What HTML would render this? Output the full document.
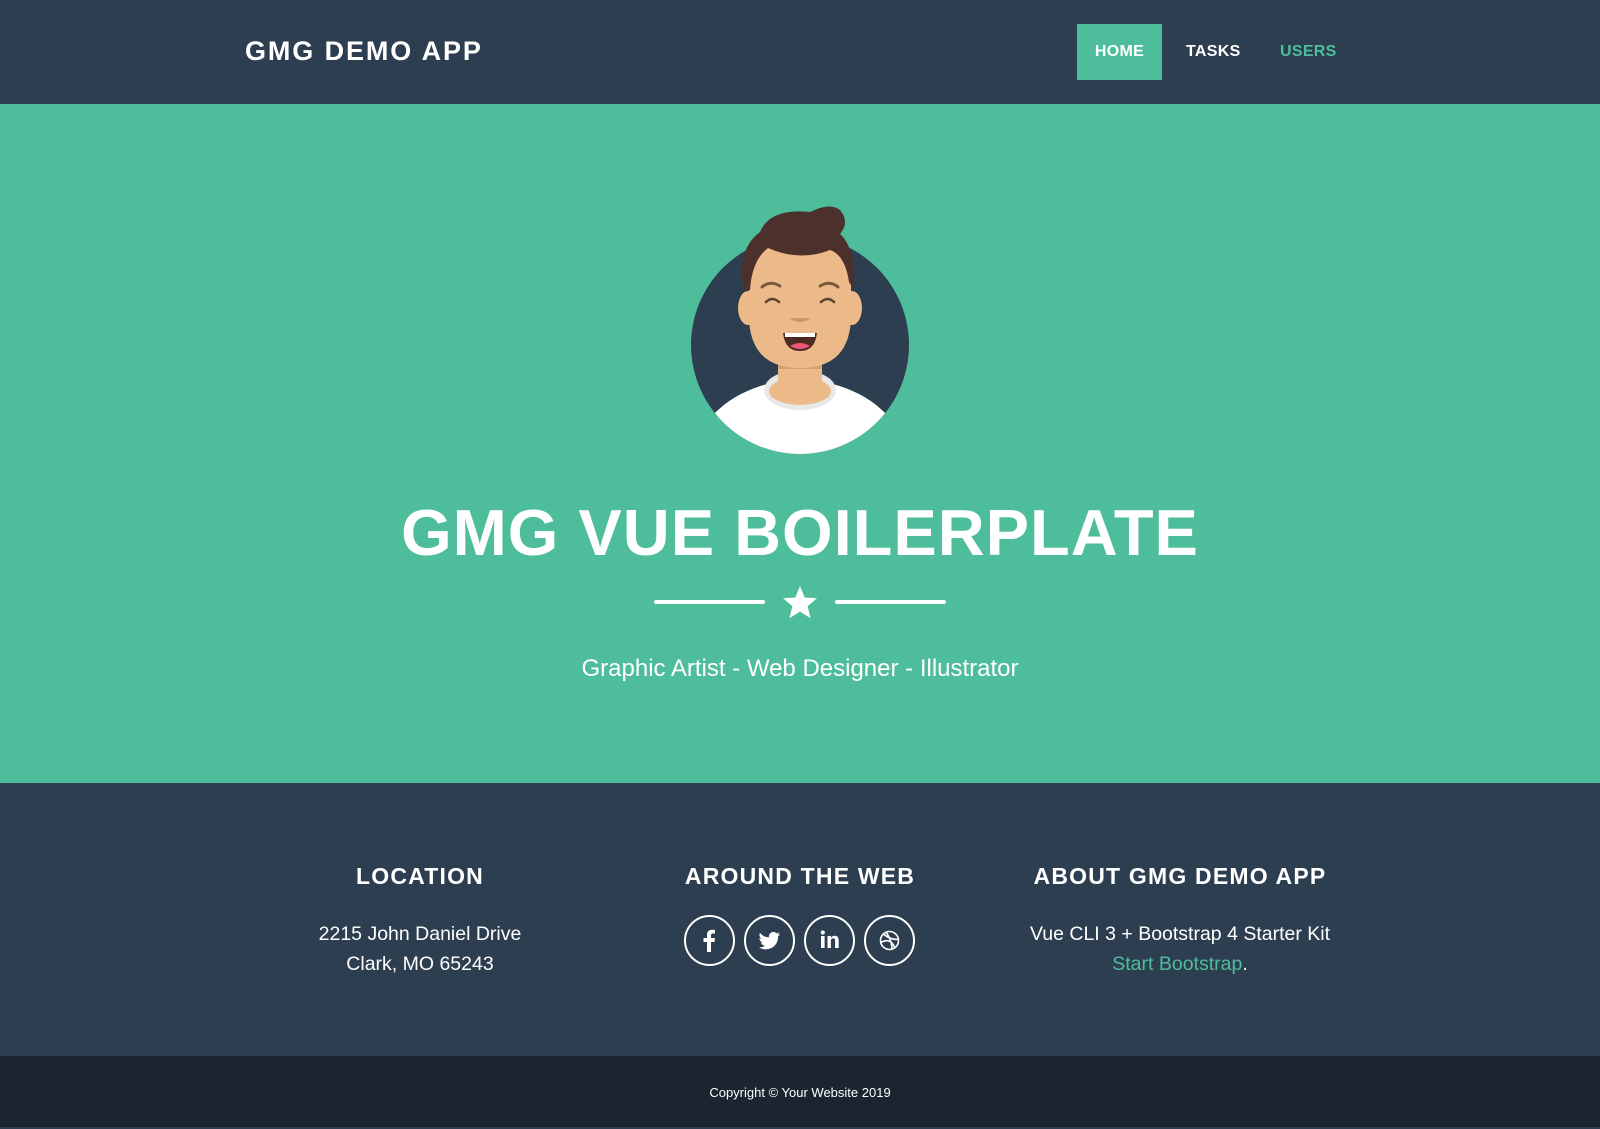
<!DOCTYPE html>
<html><head><meta charset="utf-8"><style>
*{margin:0;padding:0;box-sizing:border-box}
body{width:1600px;height:1127px;overflow:hidden;font-family:"Liberation Sans",sans-serif;background:#2c3e50;color:#fff}
.nav{position:absolute;top:0;left:0;width:1600px;height:104px;background:#2c3e50}
.brand{position:absolute;left:245px;top:36px;font-size:27px;font-weight:bold;letter-spacing:1.9px}
.nl{position:absolute;top:24px;height:56px;line-height:56px;font-size:16px;font-weight:bold;letter-spacing:.3px}
.hero{position:absolute;top:104px;left:0;width:1600px;height:679px;background:#4ebd9b}
.title{position:absolute;top:495px;left:0;width:1600px;text-align:center;font-size:65px;font-weight:bold;letter-spacing:1px}
.sub{position:absolute;top:655px;width:1600px;text-align:center;font-size:24px}
.line{position:absolute;top:600px;height:4px;width:111px;background:#fff;border-radius:2px}
.foot{position:absolute;top:783px;left:0;width:1600px;height:271px;background:#2c3e50}
.col{position:absolute;width:400px;text-align:center}
.col h4{font-size:23px;font-weight:bold;letter-spacing:1.2px;height:40px}
.col p{font-size:19.5px;line-height:30px;margin-top:16px}
.copy{position:absolute;top:1056px;left:0;width:1600px;height:71px;background:#1a252f;text-align:center;font-size:13px;line-height:73px}
.ic{position:absolute;top:915px;width:51px;height:51px;border:2px solid #fff;border-radius:50%}
</style></head><body>
<div class="nav">
<div class="brand">GMG DEMO APP</div>
<div class="nl" style="left:1077px;width:85px;background:#4ebd9b;text-align:center">HOME</div>
<div class="nl" style="left:1186px">TASKS</div>
<div class="nl" style="left:1280px;color:#4ebd9b">USERS</div>
</div>
<div class="hero"></div>
<svg style="position:absolute;left:0;top:0" width="1600" height="800">
<defs><clipPath id="c"><circle cx="800" cy="345" r="109"/></clipPath></defs>
<circle cx="800" cy="345" r="109" fill="#2c3e50"/>
<g clip-path="url(#c)">
<ellipse cx="800" cy="470" rx="110" ry="90" fill="#fff"/>
<ellipse cx="800" cy="390" rx="36" ry="20" fill="#e8e8e8"/>
</g>
<rect x="778" y="355" width="44" height="40" fill="#ecb989"/>
<ellipse cx="800" cy="391" rx="31" ry="14" fill="#ecb989"/>
<rect x="778" y="355" width="44" height="14" fill="#d3a174"/>
<ellipse cx="748" cy="308" rx="10" ry="17" fill="#ecb989"/>
<ellipse cx="852" cy="308" rx="10" ry="17" fill="#ecb989"/>
<path d="M749 260 Q749 243 800 243 Q851 243 851 260 L851 315 Q851 368 800 368 Q749 368 749 315Z" fill="#ecb989"/>
<path d="M744 290 Q736 250 760 232 Q770 208 810 212 Q830 202 840 210 Q850 222 840 234 Q856 248 854 290 L849 282 Q845 255 830 250 Q800 262 768 248 Q752 260 750 290Z" fill="#4b302c"/>
<path d="M762 287 Q770 280 780 286 M820 286 Q830 280 838 287" stroke="#7a5a3c" stroke-width="3" fill="none" stroke-linecap="round"/>
<path d="M766 302 Q772 296 779 302 M821 302 Q828 296 834 302" stroke="#5a4030" stroke-width="2.5" fill="none" stroke-linecap="round"/>
<path d="M789 318 Q800 326 811 318Z" fill="#c9976b"/>
<path d="M783 333 L817 333 Q815 351 800 351 Q785 351 783 333Z" fill="#4b2a22"/>
<rect x="785" y="333" width="30" height="4" fill="#fff"/>
<path d="M790 346 Q800 340 810 346 Q800 352 790 346Z" fill="#f0557a"/>
<polygon points="800,586 804.7,597.5 817,598.3 807.6,606.2 810.6,618.2 800,611.6 789.4,618.2 792.4,606.2 783,598.3 795.3,597.5" fill="#fff"/>
</svg>
<div class="title">GMG VUE BOILERPLATE</div>
<div class="line" style="left:654px"></div>
<div class="line" style="left:835px"></div>
<div class="sub">Graphic Artist - Web Designer - Illustrator</div>
<div class="foot"></div>
<div class="col" style="left:220px;top:863px"><h4>LOCATION</h4><p>2215 John Daniel Drive<br>Clark, MO 65243</p></div>
<div class="col" style="left:600px;top:863px"><h4>AROUND THE WEB</h4></div>
<div class="col" style="left:980px;top:863px"><h4>ABOUT GMG DEMO APP</h4><p>Vue CLI 3 + Bootstrap 4 Starter Kit<br><span style="color:#4ebd9b">Start Bootstrap</span>.</p></div>
<div class="ic" style="left:684px"><svg width="47" height="47"><path d="M25 35V25h3.5l.5-4h-4v-2.5c0-1.2.4-2 2-2h2v-3.5c-.4 0-1.6-.2-3-.2-3 0-5 1.8-5 5.2V21h-3.5v4H21v10z" fill="#fff"/></svg></div>
<div class="ic" style="left:744px"><svg width="47" height="47"><path d="M34 17c-.8.4-1.6.6-2.5.7.9-.5 1.6-1.4 1.9-2.4-.8.5-1.800.9-2.8 1.1a4.4 4.4 0 0 0-7.500 4A12.4 12.4 0 0 1 14 15.9a4.4 4.4 0 0 0 1.4 5.800c-.7 0-1.4-.2-2-.5 0 2.1 1.500 3.9 3.5 4.3-.6.2-1.3.2-2 .1.6 1.700 2.200 3 4.100 3A8.8 8.8 0 0 1 13 30.4 12.4 12.4 0 0 0 32.1 20v-.6c.8-.6 1.500-1.300 1.900-2.400z" fill="#fff"/></svg></div>
<div class="ic" style="left:804px"><svg width="47" height="47"><rect x="15" y="19" width="3.6" height="12" fill="#fff"/><circle cx="16.8" cy="15.5" r="2.1" fill="#fff"/><path d="M21.5 19h3.4v1.7c.6-1.1 2-2 3.8-2 3.4 0 4 2.2 4 5.1V31h-3.6v-6.3c0-1.5 0-3.3-2-3.3s-2.2 1.6-2.2 3.2V31h-3.4z" fill="#fff"/></svg></div>
<div class="ic" style="left:864px"><svg width="47" height="47" fill="none" stroke="#fff" stroke-width="1.6"><circle cx="23.5" cy="23.5" r="9"/><path d="M17 16.5c4 4 11 7 16 5.5M15 25.5c5-3 11-3 14 6M20 15c3 4 6 11 6 17"/></svg></div>
<div class="copy">Copyright © Your Website 2019</div>
</body></html>
